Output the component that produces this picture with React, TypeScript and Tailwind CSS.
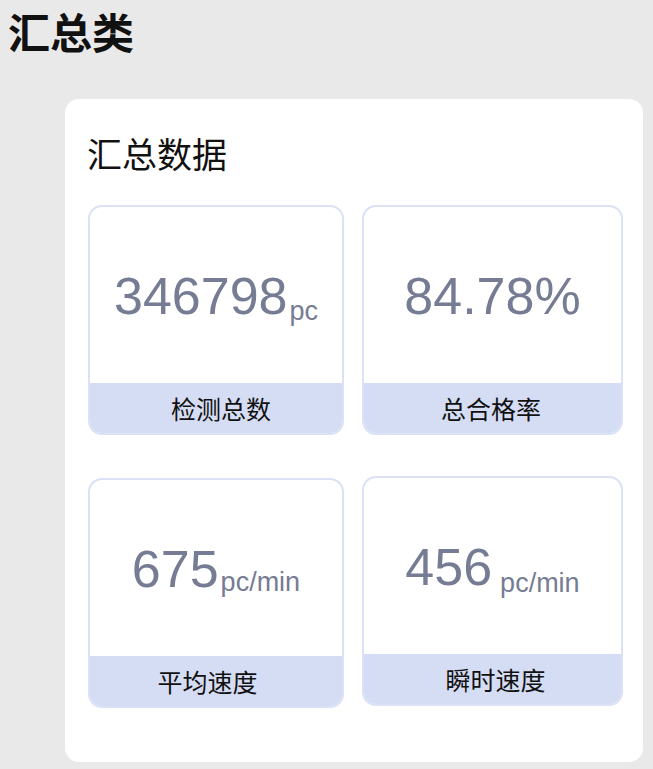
const stats = [
  { value: "346798", unit: "pc", label: "检测总数", unitGap: "ml-0.5", unitDrop: "top-[6px]", labelPad: "pl-[10px]", shift: "" },
  { value: "84.78%", unit: "", label: "总合格率", unitGap: "", unitDrop: "", labelPad: "pr-[3px]", shift: "" },
  { value: "675", unit: "pc/min", label: "平均速度", unitGap: "ml-0.5", unitDrop: "top-[4px]", labelPad: "pr-[17px]", shift: "" },
  { value: "456", unit: "pc/min", label: "瞬时速度", unitGap: "ml-2", unitDrop: "top-[7px]", labelPad: "pl-[6px]", shift: "-mt-[2px]" },
];

const cjk = "font-['Noto_Sans_CJK_SC',sans-serif]";
const num = "font-['Liberation_Sans','Noto_Sans_CJK_SC',sans-serif]";

type Stat = (typeof stats)[number];

function StatCard({ value, unit, label, unitGap, unitDrop, labelPad, shift }: Stat) {
  return (
    <div className={`flex h-[230px] flex-col overflow-hidden rounded-[14px] border-2 border-[#dbe2f6] bg-white ${shift}`}>
      <div className={`flex flex-1 items-baseline justify-center pt-[63px] text-[#767c93] ${num}`}>
        <span className="text-[52px] leading-none">{value}</span>
        {unit && (
          <span className={`relative text-[27px] leading-none ${unitGap} ${unitDrop}`}>{unit}</span>
        )}
      </div>
      <div
        className={`flex h-[50px] items-center justify-center bg-[#d5ddf4] pt-[2px] text-[25px] text-[#111] ${labelPad} ${cjk}`}
      >
        {label}
      </div>
    </div>
  );
}

export default function App() {
  return (
    <div className={`min-h-[769px] bg-[#e9e9e9] pt-[9px] ${cjk}`}>
      <h1 className="pl-[8px] text-[42px] font-bold leading-[44px] text-[#111]">汇总类</h1>
      <div className="ml-[65px] mr-[10px] mt-[46px] h-[663px] rounded-[14px] bg-white pl-[23px] pt-[36px]">
        <h2 className="-ml-px text-[35px] leading-none text-[#111]">汇总数据</h2>
        <div className="mt-[35px] grid grid-cols-[256px_261px] gap-x-[18px] gap-y-[43px]">
          {stats.map((s) => (
            <StatCard key={s.label} {...s} />
          ))}
        </div>
      </div>
    </div>
  );
}
